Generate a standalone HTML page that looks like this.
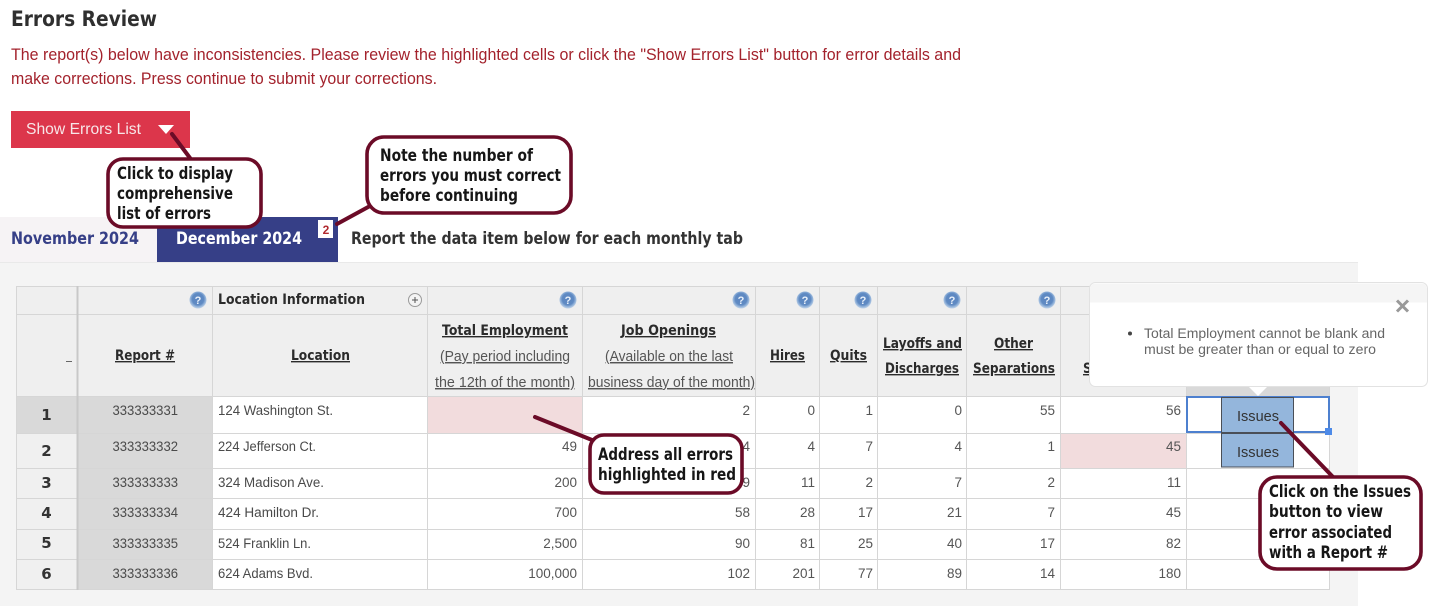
<!DOCTYPE html>
<html lang="en">
<head>
<meta charset="utf-8">
<title>Errors Review</title>
<style>
html,body{margin:0;padding:0;background:#fff;width:1429px;height:606px;overflow:hidden}
svg{display:block;font-family:"Liberation Sans",sans-serif}
.n{font-size:13.5px;fill:#555;text-anchor:end}
.l{font-size:13.5px;fill:#4a4a4a}
.r{font-size:13.5px;fill:#4a4a4a}
.h{font-family:"DejaVu Sans",sans-serif;font-weight:bold;font-size:14px;fill:#2b2b2b;text-decoration:underline}
.s{font-size:14.5px;fill:#555;text-decoration:underline}
.c{font-family:"DejaVu Sans",sans-serif;font-weight:bold;font-size:16.5px;fill:#161616}
.i{font-family:"DejaVu Sans",sans-serif;font-weight:bold;font-size:15px;fill:#333;text-anchor:middle}
.k{fill:none;stroke:#6b0b27;stroke-width:4;stroke-linecap:round}
.b{fill:#fff;stroke:#6b0b27;stroke-width:3.6}
.g{stroke:#d6d6d6;stroke-width:1}
</style>
</head>
<body>
<svg width="1429" height="606" viewBox="0 0 1429 606" xmlns="http://www.w3.org/2000/svg">
<defs>
<radialGradient id="q" cx="50%" cy="45%" r="55%"><stop offset="0" stop-color="#5c86c0"/><stop offset=".62" stop-color="#5f8ac3"/><stop offset=".8" stop-color="#8fb0d8"/><stop offset="1" stop-color="#c3d5ea"/></radialGradient>
<g id="help"><circle r="8.500" fill="url(#q)"/><text y="4" text-anchor="middle" font-size="11" font-weight="bold" fill="#e8f0fa">?</text></g>
</defs>

<text x="11" y="26" font-family="DejaVu Sans,sans-serif" font-weight="bold" font-size="21" fill="#2f2f2f" textLength="146" lengthAdjust="spacingAndGlyphs">Errors Review</text>
<text x="11" y="60" font-size="16.5" fill="#a3222c" textLength="950" lengthAdjust="spacingAndGlyphs">The report(s) below have inconsistencies. Please review the highlighted cells or click the "Show Errors List" button for error details and</text>
<text x="11" y="84" font-size="16.5" fill="#a3222c" textLength="426" lengthAdjust="spacingAndGlyphs">make corrections. Press continue to submit your corrections.</text>

<rect x="11" y="111" width="179" height="37" fill="#dc364b"/>
<text x="26" y="134" font-size="16" fill="#f7e6e8" textLength="115" lengthAdjust="spacingAndGlyphs">Show Errors List</text>
<path d="M158 125h16l-8 9z" fill="#fff"/>

<!-- tabs -->
<rect x="0" y="217" width="157" height="45" fill="#f6f3f5"/>
<rect x="157" y="217" width="181" height="45" fill="#363f87"/>
<text x="11" y="244" font-family="DejaVu Sans,sans-serif" font-weight="bold" font-size="16.5" fill="#363f87" textLength="128" lengthAdjust="spacingAndGlyphs">November 2024</text>
<text x="176" y="244" font-family="DejaVu Sans,sans-serif" font-weight="bold" font-size="16.5" fill="#fff" textLength="126" lengthAdjust="spacingAndGlyphs">December 2024</text>
<rect x="318" y="220" width="15" height="18" fill="#fff"/>
<text x="326" y="234" text-anchor="middle" font-size="12" font-weight="bold" fill="#b02a30">2</text>
<text x="351" y="244" font-family="DejaVu Sans,sans-serif" font-weight="bold" font-size="16.5" fill="#333" textLength="392" lengthAdjust="spacingAndGlyphs">Report the data item below for each monthly tab</text>

<!-- panel -->
<rect x="0" y="262" width="1358" height="344" fill="#f4f4f4"/>
<rect x="0" y="262" width="1358" height="1" fill="#e9e9e9"/>

<!-- table -->
<rect x="16" y="286" width="1314" height="111" fill="#efefef"/>
<rect x="16" y="397" width="61" height="193" fill="#f0f0f0"/>
<rect x="16" y="397" width="61" height="36" fill="#d9d9d9"/>
<rect x="77" y="397" width="136" height="193" fill="#d9d9d9"/>
<rect x="213" y="397" width="1117" height="193" fill="#fff"/>
<rect x="428" y="397" width="155" height="36" fill="#f2dcdd"/>
<rect x="1061" y="433" width="126" height="35" fill="#f2dcdd"/>
<rect x="1187" y="386" width="143" height="11" fill="#d9d9d9"/>

<g class="g">
<path d="M16 286.500H1330M16 314.500H1330M16 396.500H1330M16 433.500H1330M16 468.500H1330M16 498.500H1330M16 529.500H1330M16 559.500H1330M16 589.500H1330"/>
<path d="M16.500 286V590M212.500 286V590M427.500 286V590M582.500 286V590M755.500 286V590M819.500 286V590M877.500 286V590M966.500 286V590M1060.500 286V590M1186.500 286V590M1329.500 286V590"/>
</g>
<path d="M77.500 286V590" stroke="#c8c8c8" stroke-width="2"/>

<use href="#help" x="198" y="300"/>
<use href="#help" x="568" y="300"/>
<use href="#help" x="741" y="300"/>
<use href="#help" x="805" y="300"/>
<use href="#help" x="863" y="300"/>
<use href="#help" x="952" y="300"/>
<use href="#help" x="1047" y="300"/>

<text x="218" y="304" font-family="DejaVu Sans,sans-serif" font-weight="bold" font-size="14" fill="#2b2b2b" textLength="147" lengthAdjust="spacingAndGlyphs">Location Information</text>
<circle cx="415" cy="300" r="6.500" fill="#f4f4f4" stroke="#9a9a9a"/>
<path d="M412 300h6M415 297v6" stroke="#555"/>

<path d="M66 361.500h6" stroke="#666"/>
<text class="h" x="115" y="360" textLength="60" lengthAdjust="spacingAndGlyphs">Report #</text>
<text class="h" x="291" y="360" textLength="59" lengthAdjust="spacingAndGlyphs">Location</text>
<text class="h" x="442" y="335" textLength="126" lengthAdjust="spacingAndGlyphs">Total Employment</text>
<text class="s" x="440" y="361" textLength="130" lengthAdjust="spacingAndGlyphs">(Pay period including</text>
<text class="s" x="435" y="387" textLength="140" lengthAdjust="spacingAndGlyphs">the 12th of the month)</text>
<text class="h" x="621" y="335" textLength="95" lengthAdjust="spacingAndGlyphs">Job Openings</text>
<text class="s" x="605" y="361" textLength="128" lengthAdjust="spacingAndGlyphs">(Available on the last</text>
<text class="s" x="588" y="387" textLength="167" lengthAdjust="spacingAndGlyphs">business day of the month)</text>
<text class="h" x="770" y="360" textLength="35" lengthAdjust="spacingAndGlyphs">Hires</text>
<text class="h" x="830" y="360" textLength="37" lengthAdjust="spacingAndGlyphs">Quits</text>
<text class="h" x="883" y="348" textLength="79" lengthAdjust="spacingAndGlyphs">Layoffs and</text>
<text class="h" x="885" y="373" textLength="74" lengthAdjust="spacingAndGlyphs">Discharges</text>
<text class="h" x="994" y="348" textLength="39" lengthAdjust="spacingAndGlyphs">Other</text>
<text class="h" x="973" y="373" textLength="82" lengthAdjust="spacingAndGlyphs">Separations</text>
<text class="h" x="1083" y="373" textLength="82" lengthAdjust="spacingAndGlyphs">Separations</text>

<!-- row numbers -->
<text class="i" x="46.500" y="420">1</text>
<text class="i" x="46.500" y="456">2</text>
<text class="i" x="46.500" y="488">3</text>
<text class="i" x="46.500" y="518">4</text>
<text class="i" x="46.500" y="548">5</text>
<text class="i" x="46.500" y="579">6</text>

<!-- report ids -->
<text class="r" x="112.500" y="415" textLength="65.500" lengthAdjust="spacingAndGlyphs">333333331</text>
<text class="r" x="112.500" y="451" textLength="65.500" lengthAdjust="spacingAndGlyphs">333333332</text>
<text class="r" x="112.500" y="487" textLength="65.500" lengthAdjust="spacingAndGlyphs">333333333</text>
<text class="r" x="112.500" y="517" textLength="65.500" lengthAdjust="spacingAndGlyphs">333333334</text>
<text class="r" x="112.500" y="548" textLength="65.500" lengthAdjust="spacingAndGlyphs">333333335</text>
<text class="r" x="112.500" y="578" textLength="65.500" lengthAdjust="spacingAndGlyphs">333333336</text>

<!-- locations -->
<text class="l" x="218" y="415" textLength="115" lengthAdjust="spacingAndGlyphs">124 Washington St.</text>
<text class="l" x="218" y="451" textLength="98" lengthAdjust="spacingAndGlyphs">224 Jefferson Ct.</text>
<text class="l" x="218" y="487" textLength="106" lengthAdjust="spacingAndGlyphs">324 Madison Ave.</text>
<text class="l" x="218" y="517" textLength="101" lengthAdjust="spacingAndGlyphs">424 Hamilton Dr.</text>
<text class="l" x="218" y="548" textLength="93" lengthAdjust="spacingAndGlyphs">524 Franklin Ln.</text>
<text class="l" x="218" y="578" textLength="95" lengthAdjust="spacingAndGlyphs">624 Adams Bvd.</text>

<!-- numbers -->
<g>
<text class="n" x="750" y="415">2</text><text class="n" x="815" y="415">0</text><text class="n" x="873" y="415">1</text><text class="n" x="962" y="415">0</text><text class="n" x="1055" y="415">55</text><text class="n" x="1181" y="415">56</text>
<text class="n" x="577" y="451">49</text><text class="n" x="750" y="451">4</text><text class="n" x="815" y="451">4</text><text class="n" x="873" y="451">7</text><text class="n" x="962" y="451">4</text><text class="n" x="1055" y="451">1</text><text class="n" x="1181" y="451">45</text>
<text class="n" x="577" y="487">200</text><text class="n" x="750" y="487">9</text><text class="n" x="815" y="487">11</text><text class="n" x="873" y="487">2</text><text class="n" x="962" y="487">7</text><text class="n" x="1055" y="487">2</text><text class="n" x="1181" y="487">11</text>
<text class="n" x="577" y="517">700</text><text class="n" x="750" y="517">58</text><text class="n" x="815" y="517">28</text><text class="n" x="873" y="517">17</text><text class="n" x="962" y="517">21</text><text class="n" x="1055" y="517">7</text><text class="n" x="1181" y="517">45</text>
<text class="n" x="577" y="548">2,500</text><text class="n" x="750" y="548">90</text><text class="n" x="815" y="548">81</text><text class="n" x="873" y="548">25</text><text class="n" x="962" y="548">40</text><text class="n" x="1055" y="548">17</text><text class="n" x="1181" y="548">82</text>
<text class="n" x="577" y="578">100,000</text><text class="n" x="750" y="578">102</text><text class="n" x="815" y="578">201</text><text class="n" x="873" y="578">77</text><text class="n" x="962" y="578">89</text><text class="n" x="1055" y="578">14</text><text class="n" x="1181" y="578">180</text>
</g>

<!-- issues -->
<rect x="1187" y="397" width="142" height="35" fill="none" stroke="#4d80cf" stroke-width="2"/>
<rect x="1325" y="428" width="7" height="7" fill="#4d8ae8"/>
<rect x="1221.500" y="397.500" width="72" height="35" fill="#94b6dc" stroke="#4a4f57"/>
<rect x="1221.500" y="433.500" width="72" height="33.500" fill="#94b6dc" stroke="#4a4f57"/>
<text x="1258" y="421" text-anchor="middle" font-size="15" fill="#333" textLength="42" lengthAdjust="spacingAndGlyphs">Issues</text>
<text x="1258" y="457" text-anchor="middle" font-size="15" fill="#333" textLength="42" lengthAdjust="spacingAndGlyphs">Issues</text>

<!-- popover -->
<path d="M1248 386l10 10 10-10z" fill="#fff"/>
<rect x="1089.500" y="282.500" width="338" height="104" rx="6" fill="#fff" stroke="#e2e2e2"/>
<path d="M1090 302.500v-14a5 5 0 0 1 5-5h327a5 5 0 0 1 5 5v14z" fill="#f5f5f5"/>
<circle cx="1130" cy="333.500" r="2" fill="#444"/>
<text x="1144" y="338" font-size="13.5" fill="#666" textLength="241" lengthAdjust="spacingAndGlyphs">Total Employment cannot be blank and</text>
<text x="1144" y="354" font-size="13.5" fill="#666" textLength="232" lengthAdjust="spacingAndGlyphs">must be greater than or equal to zero</text>
<path d="M1397 300.500l11 11M1408 300.500l-11 11" stroke="#999" stroke-width="3"/>

<!-- callouts -->
<path class="k" d="M172 134L190 158"/>
<rect class="b" x="108" y="159" width="153" height="68" rx="15"/>
<text class="c" x="117" y="179" textLength="116" lengthAdjust="spacingAndGlyphs">Click to display</text>
<text class="c" x="117" y="199" textLength="116" lengthAdjust="spacingAndGlyphs">comprehensive</text>
<text class="c" x="117" y="219" textLength="94" lengthAdjust="spacingAndGlyphs">list of errors</text>

<path class="k" d="M337 224L370 206"/>
<rect class="b" x="367" y="137" width="204" height="76" rx="17"/>
<text class="c" x="380" y="161" textLength="153" lengthAdjust="spacingAndGlyphs">Note the number of</text>
<text class="c" x="380" y="181" textLength="181" lengthAdjust="spacingAndGlyphs">errors you must correct</text>
<text class="c" x="380" y="201" textLength="138" lengthAdjust="spacingAndGlyphs">before continuing</text>

<path class="k" d="M535 417L592 440"/>
<rect class="b" x="590" y="435" width="152" height="58" rx="14"/>
<text class="c" x="598" y="460" textLength="135" lengthAdjust="spacingAndGlyphs">Address all errors</text>
<text class="c" x="598" y="480" textLength="138" lengthAdjust="spacingAndGlyphs">highlighted in red</text>

<path class="k" d="M1281 423L1333 477"/>
<rect class="b" x="1260" y="477" width="161" height="92" rx="17"/>
<text class="c" x="1269" y="497" textLength="142" lengthAdjust="spacingAndGlyphs">Click on the Issues</text>
<text class="c" x="1269" y="517" textLength="114" lengthAdjust="spacingAndGlyphs">button to view</text>
<text class="c" x="1269" y="538" textLength="123" lengthAdjust="spacingAndGlyphs">error associated</text>
<text class="c" x="1269" y="558" textLength="119" lengthAdjust="spacingAndGlyphs">with a Report #</text>
</svg>
</body>
</html>
